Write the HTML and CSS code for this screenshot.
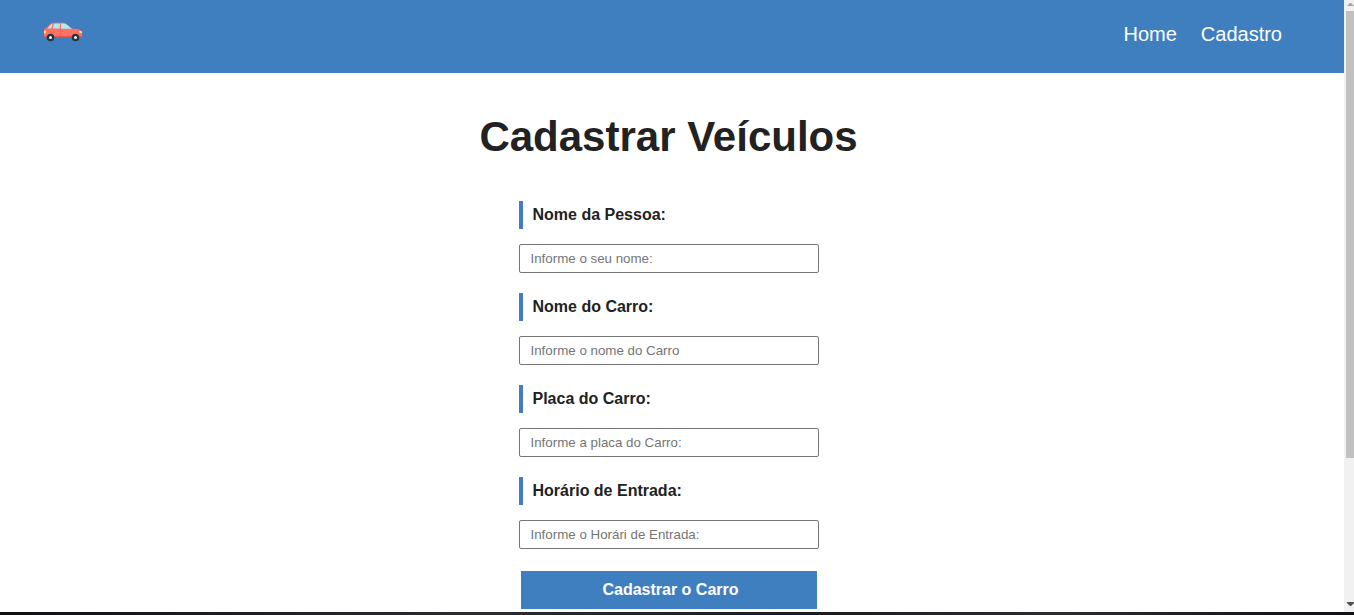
FILE: index.html
```html
<!DOCTYPE html>
<html lang="pt-BR">
<head>
<meta charset="UTF-8">
<meta name="viewport" content="width=device-width, initial-scale=1.0">
<title>Cadastrar Veículos</title>
<link rel="stylesheet" href="styles.css">
</head>
<body>
<div class="window">
  <div class="page">
    <header class="header">
      <a class="logo" href="#" aria-label="Início">
        <svg viewBox="0 0 40 20" width="40" height="20" aria-hidden="true">
          <path fill="#ff7163" d="M1 8Q1 6.500 3 6.300L6.500 2.500Q8 .8 10 .8H20Q22 .8 24 2.500L29 6.500 35 7.300Q39 8.200 39.200 11V14.500Q39.200 15.800 37.500 15.800H3Q1 15.800 1 13.500Z"/>
          <path fill="#a9ecf2" d="M4.500 6.500 7.500 3Q8.300 2 9.500 1.800L8.300 6.500ZM9.700 6.500 10.500 3Q10.800 1.500 12 1.500H16.800V6.500ZM18 1.500H20.500Q22.300 1.500 24 2.800L28.800 6.700H18Z"/>
          <path fill="#e5493f" d="M1 14.300H39.200V14.800Q39.200 16 37.500 16H3Q1.200 16 1 14.300Z"/>
          <path fill="#e85d52" d="M17 7H17.600V14H17ZM18.500 9.200H20.500V9.900H18.500Z"/>
          <path fill="#ffe88a" d="M36 9H38.500L39.200 11H37.500Q36.300 10.700 36 9ZM1 8.800H2.800V11.500H1Z"/>
          <circle cx="7.500" cy="15.500" r="3.800" fill="#283541"/>
          <circle cx="32.500" cy="15.500" r="3.800" fill="#283541"/>
          <circle cx="7.500" cy="15.500" r="1.500" fill="#f1f4f5"/>
          <circle cx="32.500" cy="15.500" r="1.500" fill="#f1f4f5"/>
        </svg>
      </a>
      <nav class="menu">
        <a href="#">Home</a>
        <a href="#">Cadastro</a>
      </nav>
    </header>
    <main class="content">
      <h1 class="title">Cadastrar Veículos</h1>
      <form class="form">
        <label class="label" for="pessoa">Nome da Pessoa:</label>
        <input class="field" id="pessoa" type="text" placeholder="Informe o seu nome:">
        <label class="label" for="carro">Nome do Carro:</label>
        <input class="field" id="carro" type="text" placeholder="Informe o nome do Carro">
        <label class="label" for="placa">Placa do Carro:</label>
        <input class="field" id="placa" type="text" placeholder="Informe a placa do Carro:">
        <label class="label" for="entrada">Horário de Entrada:</label>
        <input class="field" id="entrada" type="text" placeholder="Informe o Horári de Entrada:">
        <button class="submit" type="button">Cadastrar o Carro</button>
      </form>
    </main>
  </div>
  <div class="scrollbar" aria-hidden="true">
    <svg class="arrow" viewBox="0 0 8 11" width="8" height="11"><path fill="#a3a3a3" d="M1 6 4 3H5L8 6Z"/></svg>
    <div class="thumb"></div>
    <svg class="arrow" viewBox="0 0 8 11" width="8" height="11"><path fill="#505050" d="M1 1H8V2L5 5H4L1 2Z"/></svg>
  </div>
</div>
<div class="edge"></div>
</body>
</html>
```
FILE: styles.css
```css
* {
  box-sizing: border-box;
  margin: 0;
  padding: 0;
}

body {
  display: flex;
  flex-direction: column;
  min-height: 100vh;
  background: #fff;
  color: #222;
  font-family: "Liberation Sans", Arial, sans-serif;
}

.window {
  display: flex;
  flex: 1;
}

.page {
  flex: 1;
}

.header {
  display: flex;
  justify-content: space-between;
  padding: 22px 62px 26px 43px;
  background: #3f7fbf;
}

.logo svg {
  display: block;
}

.menu {
  display: flex;
  gap: 24px;
  font-size: 20px;
  line-height: 25px;
}

.menu a {
  color: #fff;
  text-decoration: none;
}

.content {
  display: flex;
  flex-direction: column;
  align-items: center;
  padding: 40px 7px 0 0;
}

.title {
  margin-bottom: 40px;
  font-size: 42px;
  line-height: 48px;
}

.form {
  display: flex;
  flex-direction: column;
  width: 300px;
}

.label {
  margin-bottom: 15px;
  padding: 5px 10px;
  border-left: 4px solid #3f7fbf;
  font-size: 16px;
  font-weight: bold;
  line-height: 18px;
}

.field {
  height: 29px;
  margin-bottom: 20px;
  padding: 0 11px;
  border: 1px solid #767676;
  border-radius: 2px;
  background: #fff;
}

.field::placeholder {
  color: #757575;
}

.submit {
  padding: 10px 10px 10px 14px;
  border: 2px solid #fff;
  background: #3f7fbf;
  color: #fff;
  font-family: inherit;
  font-size: 16px;
  font-weight: bold;
  line-height: 18px;
}

.scrollbar {
  display: flex;
  flex-direction: column;
  width: 10px;
  padding-left: 2px;
  background: #f1f1f1;
}

.thumb {
  height: 73%;
  margin-bottom: auto;
  background: #c1c1c1;
}

.edge {
  height: 3px;
  background: linear-gradient(90deg, #101012, #2c2c2e 35%, #1c1b1f 60%, #2c2c2e 78%, #101012);
}
```
